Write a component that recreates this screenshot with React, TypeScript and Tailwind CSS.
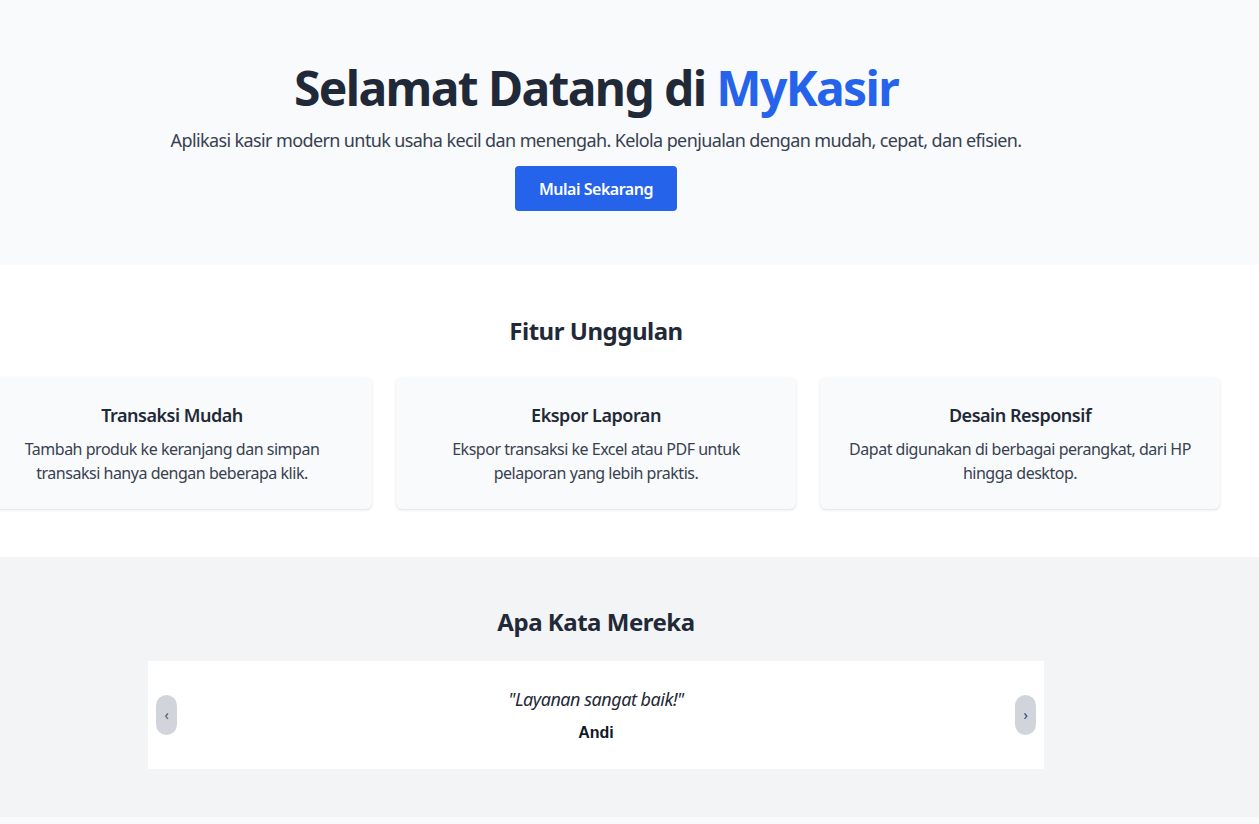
import React, { useState } from 'react';

const features = [
  {
    title: 'Transaksi Mudah',
    desc: 'Tambah produk ke keranjang dan simpan transaksi hanya dengan beberapa klik.',
  },
  {
    title: 'Ekspor Laporan',
    desc: 'Ekspor transaksi ke Excel atau PDF untuk pelaporan yang lebih praktis.',
  },
  {
    title: 'Desain Responsif',
    desc: 'Dapat digunakan di berbagai perangkat, dari HP hingga desktop.',
  },
];

const testimonials = [
  { quote: 'Layanan sangat baik!', name: 'Andi' },
  { quote: 'Aplikasinya mudah dipakai.', name: 'Siti' },
];

const App: React.FC = () => {
  const [idx, setIdx] = useState(0);
  const t = testimonials[idx];

  const prev = () => setIdx((idx - 1 + testimonials.length) % testimonials.length);
  const next = () => setIdx((idx + 1) % testimonials.length);

  return (
    <div
      className="min-h-screen bg-[#f9fafb] text-[#1f2937] overflow-x-hidden tracking-[-0.03em]"
      style={{ fontFamily: '"Noto Sans", "Open Sans", sans-serif' }}
    >
      {/* Hero */}
      <section className="bg-[#f9fafb] pt-16 pb-[54px]">
        <div className="w-[1192px] flex flex-col items-center text-center">
          <h1 className="text-5xl leading-none font-bold text-[#1f2937] tracking-[-0.034em]">
            Selamat Datang di <span className="text-[#2563eb]">MyKasir</span>
          </h1>
          <p className="mt-[14px] text-lg leading-7 text-[#374151] whitespace-nowrap tracking-[-0.034em]">
            Aplikasi kasir modern untuk usaha kecil dan menengah. Kelola penjualan dengan mudah, cepat, dan efisien.
          </p>
          <button className="mt-3 h-[45px] px-6 rounded bg-[#2563eb] text-white font-semibold text-base">
            Mulai Sekarang
          </button>
        </div>
      </section>

      {/* Features */}
      <section className="bg-white pt-[50px] pb-12">
        <div className="w-[1192px] flex flex-col items-center">
          <h2 className="text-2xl leading-8 font-bold text-[#1f2937]">Fitur Unggulan</h2>
          <div className="mt-[30px] w-full flex justify-center">
            <div className="shrink-0 w-[1248px] grid grid-cols-3 gap-6">
              {features.map((f) => (
                <div key={f.title} className="h-[132px] bg-[#f9fafb] rounded-md shadow-sm p-6 text-center">
                  <h3 className="text-lg leading-7 font-semibold text-[#1f2937]">{f.title}</h3>
                  <p className="mt-2 text-base leading-6 text-[#374151]">{f.desc}</p>
                </div>
              ))}
            </div>
          </div>
        </div>
      </section>

      {/* Testimonials */}
      <section className="bg-[#f3f4f6] pt-[49px] pb-12">
        <div className="w-[1192px] flex flex-col items-center">
          <h2 className="text-2xl leading-8 font-bold text-[#1f2937]">Apa Kata Mereka</h2>
          <div className="relative mt-[23px] w-[896px] bg-white p-6 text-center">
            <button
              onClick={prev}
              className="absolute left-2 top-1/2 -translate-y-1/2 w-[21px] h-10 rounded-full bg-[#d1d5db] text-sm text-[#4b5563] flex items-center justify-center"
            >
              ‹
            </button>
            <p className="text-lg leading-7 italic text-[#1f2937]">"{t.quote}"</p>
            <p
              className="mt-2 text-base leading-6 font-bold text-[#111827] tracking-normal"
              style={{ fontFamily: '"Liberation Sans", Arial, sans-serif' }}
            >
              {t.name}
            </p>
            <button
              onClick={next}
              className="absolute right-2 top-1/2 -translate-y-1/2 w-[21px] h-10 rounded-full bg-[#d1d5db] text-sm text-[#1e3a8a] flex items-center justify-center"
            >
              ›
            </button>
          </div>
        </div>
      </section>

      <footer className="h-10 bg-[#f9fafb]" />
    </div>
  );
};

export default App;
